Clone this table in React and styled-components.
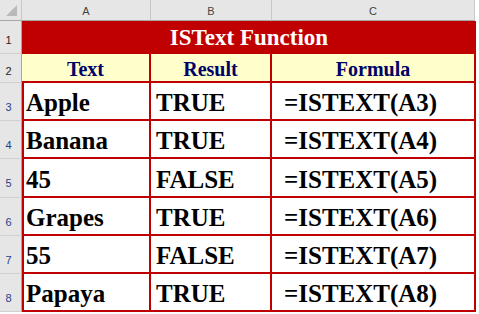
import React from "react";
import styled, { createGlobalStyle } from "styled-components";

const GlobalStyle = createGlobalStyle`
  body {
    margin: 0;
    background: #fff;
    font-family: "Liberation Serif", serif;
  }
`;

const RED = "#c00000";

const Sheet = styled.div`
  display: grid;
  grid-template-columns: 22px 129px 121px 204px;
  grid-template-rows: 21px 33px 29px 38px 38px 39px 38px 38px 38px;
  width: 476px;
`;

const Corner = styled.div`
  position: relative;
  background: #e6e6e6;
  border-right: 1px solid #c8c8c8;
  border-bottom: 1px solid #a6a6a6;
  box-sizing: border-box;

  &::after {
    content: "";
    position: absolute;
    right: 4px;
    bottom: 4px;
    width: 0;
    height: 0;
    border-left: 11px solid transparent;
    border-bottom: 11px solid #b9b9b9;
  }
`;

const ColHead = styled.div`
  display: flex;
  align-items: center;
  justify-content: center;
  background: #e6e6e6;
  border-right: 1px solid #c8c8c8;
  border-bottom: 1px solid #a6a6a6;
  box-sizing: border-box;
  font-family: "Liberation Sans", Arial, sans-serif;
  font-size: 11px;
  color: #444;
  padding-top: 1px;
  margin-right: ${(p) => (p.$last ? "1px" : "0")};
`;

const RowHead = styled.div`
  display: flex;
  align-items: center;
  justify-content: center;
  background: #e6e6e6;
  border-right: 1px solid #a6a6a6;
  border-bottom: 1px solid #d0d0d0;
  box-sizing: border-box;
  font-family: "Liberation Sans", Arial, sans-serif;
  font-size: 11px;
  color: ${(p) => (p.$data ? "#1e3f8a" : "#222")};
  padding-top: ${(p) => (p.$data ? "10px" : "6px")};
  padding-right: 4px;
`;

const Title = styled.div`
  grid-column: 2 / 5;
  display: flex;
  align-items: center;
  justify-content: center;
  background: ${RED};
  color: #fff;
  font-weight: 700;
  font-size: 23px;
  line-height: 1;
`;

const HeadCell = styled.div`
  display: flex;
  align-items: flex-end;
  justify-content: center;
  background: #ffffcc;
  border-right: 2px solid ${RED};
  border-bottom: 2px solid ${RED};
  box-sizing: border-box;
  color: #000066;
  font-weight: 700;
  font-size: 20px;
  line-height: 1;
  padding-bottom: 2px;
`;

const Cell = styled.div`
  display: flex;
  align-items: flex-end;
  background: #fff;
  border-right: 2px solid ${RED};
  border-bottom: 2px solid ${RED};
  border-left: ${(p) => (p.$first ? `2px solid ${RED}` : "none")};
  box-sizing: border-box;
  color: #000;
  font-weight: 700;
  font-size: 25px;
  line-height: 1;
  padding-left: ${(p) => p.$indent}px;
  padding-bottom: 4px;
  white-space: nowrap;
`;

const rows = [
  ["Apple", "TRUE", "=ISTEXT(A3)"],
  ["Banana", "TRUE", "=ISTEXT(A4)"],
  ["45", "FALSE", "=ISTEXT(A5)"],
  ["Grapes", "TRUE", "=ISTEXT(A6)"],
  ["55", "FALSE", "=ISTEXT(A7)"],
  ["Papaya", "TRUE", "=ISTEXT(A8)"],
];

const App = () => {
  return (
    <>
      <GlobalStyle />
      <Sheet>
        {/* column letters */}
        <Corner />
        <ColHead>A</ColHead>
        <ColHead>B</ColHead>
        <ColHead $last>C</ColHead>

        {/* title */}
        <RowHead>1</RowHead>
        <Title>ISText Function</Title>

        {/* headings */}
        <RowHead>2</RowHead>
        <HeadCell>Text</HeadCell>
        <HeadCell>Result</HeadCell>
        <HeadCell>Formula</HeadCell>

        {rows.map((r, i) => (
          <React.Fragment key={i}>
            <RowHead $data>{i + 3}</RowHead>
            <Cell $first $indent={2}>{r[0]}</Cell>
            <Cell $indent={5}>{r[1]}</Cell>
            <Cell $indent={12}>{r[2]}</Cell>
          </React.Fragment>
        ))}
      </Sheet>
    </>
  );
};

export default App;
